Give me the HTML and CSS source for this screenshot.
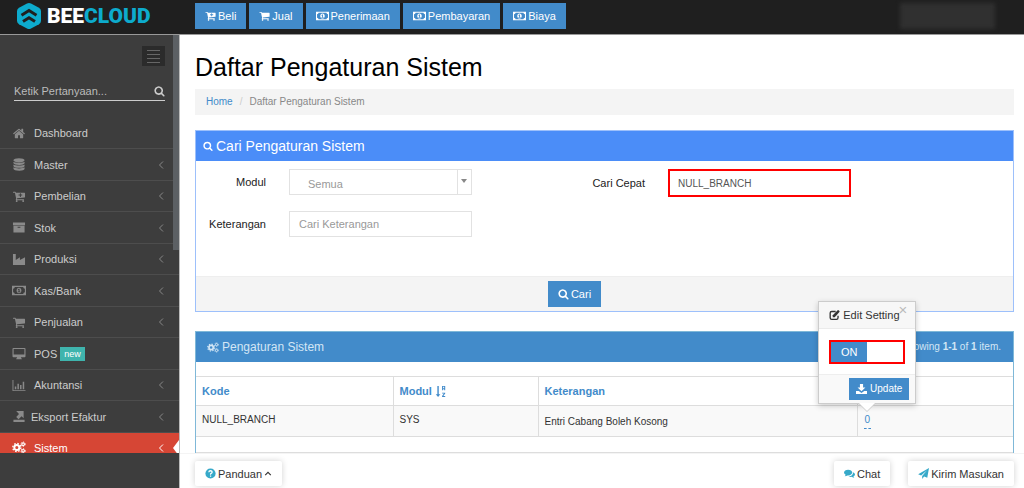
FILE: index.html
```html
<!DOCTYPE html>
<html lang="id">
<head>
<meta charset="utf-8">
<title>Daftar Pengaturan Sistem</title>
<link rel="stylesheet" href="styles.css">
</head>
<body>
<svg class="sprite" aria-hidden="true">
  <symbol id="search" viewBox="0 0 1792 1792"><path d="M1216 832q0-185-131.500-316.500t-316.500-131.500-316.500 131.500-131.500 316.500 131.500 316.500 316.500 131.500 316.500-131.500 131.500-316.500zm512 832q0 52-38 90t-90 38q-54 0-90-38l-343-342q-179 124-399 124-143 0-273.500-55.500t-225-150-150-225-55.500-273.500 55.500-273.500 150-225 225-150 273.500-55.500 273.500 55.500 225 150 150 225 55.500 273.500q0 220-124 399l343 343q37 37 37 90z"/></symbol>
  <symbol id="cart" viewBox="0 0 1792 1792"><path d="M704 1536q0 52-38 90t-90 38-90-38-38-90 38-90 90-38 90 38 38 90zm896 0q0 52-38 90t-90 38-90-38-38-90 38-90 90-38 90 38 38 90zm128-1088v512q0 24-16.500 42.500t-40.500 21.500l-1044 122q13 60 13 70 0 16-24 64h920q26 0 45 19t19 45-19 45-45 19h-1024q-26 0-45-19t-19-45q0-11 8-31.500t16-36 21.500-40 15.500-29.500l-177-823h-204q-26 0-45-19t-19-45 19-45 45-19h256q16 0 28.500 6.500t19.500 15.500 13 24.500 8 26 5.500 29.500 4.500 26h1201q26 0 45 19t19 45z"/></symbol>
  <symbol id="cart-plus" viewBox="0 0 1792 1792"><path fill-rule="evenodd" d="M704 1536q0 52-38 90t-90 38-90-38-38-90 38-90 90-38 90 38 38 90zm896 0q0 52-38 90t-90 38-90-38-38-90 38-90 90-38 90 38 38 90zm128-1088v512q0 24-16.500 42.500t-40.500 21.500l-1044 122q13 60 13 70 0 16-24 64h920q26 0 45 19t19 45-19 45-45 19h-1024q-26 0-45-19t-19-45q0-11 8-31.500t16-36 21.500-40 15.500-29.500l-177-823h-204q-26 0-45-19t-19-45 19-45 45-19h256q16 0 28.500 6.500t19.500 15.500 13 24.500 8 26 5.500 29.500 4.500 26h1201q26 0 45 19t19 45zM1024 450v180h-190v128h190v190h128v-190h190v-128h-190v-180z"/></symbol>
  <symbol id="money" viewBox="0 0 15 12"><path fill-rule="evenodd" d="M0 1h15v10H0zM3 2.200A2 2 0 0 1 1.200 4v4A2 2 0 0 1 3 9.800h9A2 2 0 0 1 13.800 8V4A2 2 0 0 1 12 2.200z"/><path fill-rule="evenodd" d="M7.500 3c1.600 0 2.600 1.400 2.600 3s-1 3-2.600 3-2.600-1.400-2.600-3 1-3 2.600-3zM7.200 4.200L6.200 5l.4.600.5-.3v1.900h-.8V8h2.500v-.8h-.7v-3z"/></symbol>
  <symbol id="home" viewBox="0 0 1792 1792"><path d="M1472 992v480q0 26-19 45t-45 19h-384v-384h-256v384h-384q-26 0-45-19t-19-45v-480q0-1 .5-3t.5-3l575-474 575 474q1 2 1 6zm223-69l-62 74q-8 9-21 11h-3q-13 0-21-7l-692-577-692 577q-12 8-24 7-13-2-21-11l-62-74q-8-10-7-23.500t11-21.500l719-599q32-26 76-26t76 26l244 204v-195q0-14 9-23t23-9h192q14 0 23 9t9 23v408l219 182q10 8 11 21.500t-7 23.500z"/></symbol>
  <symbol id="database" viewBox="0 0 14 14"><ellipse cx="7" cy="2.500" rx="6" ry="2.300"/><path d="M1 4c1.500 1.600 10.500 1.600 12 0v1.500c0 2.800-12 2.800-12 0zM1 7c1.500 1.600 10.500 1.600 12 0v1.500c0 2.800-12 2.800-12 0zM1 10c1.500 1.600 10.500 1.600 12 0v1.500c0 2.800-12 2.800-12 0z"/></symbol>
  <symbol id="archive" viewBox="0 0 14 14"><path fill-rule="evenodd" d="M.5 1.500h13v3H.5zM1 5.200h12v7.300H1zM5.500 6.200v1h3v-1z"/></symbol>
  <symbol id="factory" viewBox="0 0 14 14"><path d="M.5 13V1h3v6.500L8 4.500v3l5.500-3V13z"/></symbol>
  <symbol id="desktop" viewBox="0 0 14 14"><path fill-rule="evenodd" d="M1 1h12q1 0 1 1v8q0 1-1 1H9l.6 1.500h.4v.8H4v-.8h.4L5 11H1q-1 0-1-1V2q0-1 1-1zM1.200 2.200V8h11.600V2.200z"/></symbol>
  <symbol id="chart" viewBox="0 0 14 14"><path d="M0 1h1v11h13v1H0zM2.500 8h1.600v3H2.500zM5.300 5h1.600v6H5.300zM8.100 6.500h1.600V11H8.100zM11 3h1.600v8H11z"/></symbol>
  <symbol id="export" viewBox="0 0 14 14"><path d="M4 1h8v8l-2.200-2.200L6.500 10 4 7.500l3-3.200L5.500 2.800zM1 10.500h12V13H1z"/></symbol>
  <symbol id="cogs" viewBox="0 0 16 14"><g fill="none" stroke="currentColor"><circle cx="5.500" cy="7" r="2.900" stroke-width="2.300"/><circle cx="5.500" cy="7" r="4.600" stroke-width="1.500" stroke-dasharray="1.800 1.810"/><circle cx="12.700" cy="3.200" r="1.500" stroke-width="1.300"/><circle cx="12.700" cy="3.200" r="2.500" stroke-width="1" stroke-dasharray="1.300 1.318"/><circle cx="12.700" cy="10.800" r="1.500" stroke-width="1.300"/><circle cx="12.700" cy="10.800" r="2.500" stroke-width="1" stroke-dasharray="1.300 1.318"/></g></symbol>
  <symbol id="left" viewBox="0 0 8 10"><path d="M6 1.500L2.500 5 6 8.500" fill="none" stroke="currentColor"/></symbol>
  <symbol id="up" viewBox="0 0 10 8"><path d="M1.500 6L5 2.500 8.500 6" fill="none" stroke="currentColor" stroke-width="1.400"/></symbol>
  <symbol id="sort" viewBox="0 0 14 16"><path d="M3 1h1.800v10.500h2L3.900 15 1 11.500h2zM9 1h4v5.500h-1.300V5h-1.400v1.500H9zm1.300 1v1.800h1.400V2zM9 9.500h4v1.200l-2.400 3H13V15H9v-1.300l2.300-3H9z"/></symbol>
  <symbol id="edit" viewBox="0 0 14 14"><path d="M11.500 8v2.500q0 2-2 2h-6q-2 0-2-2v-6q0-2 2-2h5" fill="none" stroke="currentColor" stroke-width="1.700"/><path d="M4.800 10V7.300L11 1.100q.7-.6 1.400 0l.8.800q.6.700 0 1.400L7.300 10z"/></symbol>
  <symbol id="download" viewBox="0 0 14 14"><path d="M5 .5h4v4.500h3L7 10 2 5h3zM0 9.500h3.500L7 12l3.500-2.500H14v4H0z"/></symbol>
  <symbol id="help" viewBox="0 0 14 14"><circle cx="7" cy="7" r="6.500"/><path d="M4.800 5.400Q5 3.500 7 3.500t2.200 1.700Q9.200 6.500 7.100 7.400V8.500M7.100 9.600v1.500" stroke="#fff" stroke-width="1.600" fill="none"/></symbol>
  <symbol id="chat" viewBox="0 0 16 14"><path d="M6 1.500c3.300 0 6 1.900 6 4.200s-2.700 4.200-6 4.200l-1-.1Q3.500 11 1 11q1.200-.8 1.400-2.100Q0 7.700 0 5.700C0 3.400 2.700 1.500 6 1.500zM13 5c1.800.7 3 1.900 3 3.400q0 1.800-2.200 2.900.2 1.200 1.300 2-2.400-.1-3.700-1.400-2.900.4-4.900-1C10.500 10.800 13.500 8.500 13 5z"/></symbol>
  <symbol id="plane" viewBox="0 0 14 14"><path d="M14 0l-2.200 12.500-4-1.600L5.300 14v-3.700L11.500 3 4 9.500.2 8z"/></symbol>
</svg>

<header class="topbar">
  <a class="brand" href="#" aria-label="Beecloud">
    <svg class="brand-mark" viewBox="0 0 24 26" aria-hidden="true"><path class="hex" d="M10 .5q2-1 4 0l8 4.300q2 1.200 2 3.200v10q0 2-2 3.200l-8 4.300q-2 1-4 0l-8-4.300q-2-1.200-2-3.200V8q0-2 2-3.200z"/><path class="chevrons" d="M4.500 12.200L12 7.500l7.500 4.700M6 18.500l6-3.700 6 3.700"/></svg>
    <span class="brand-name">BEE<span class="brand-accent">CLOUD</span></span>
  </a>
  <nav class="shortcuts">
    <a class="btn" href="#"><svg class="ico"><use href="#cart-plus"/></svg>Beli</a>
    <a class="btn" href="#"><svg class="ico"><use href="#cart"/></svg>Jual</a>
    <a class="btn" href="#"><svg class="ico wide"><use href="#money"/></svg>Penerimaan</a>
    <a class="btn" href="#"><svg class="ico wide"><use href="#money"/></svg>Pembayaran</a>
    <a class="btn" href="#"><svg class="ico wide"><use href="#money"/></svg>Biaya</a>
  </nav>
  <div class="account"></div>
</header>

<div class="shell">
  <aside class="sidebar">
    <div class="sidebar-scroll">
      <button class="burger" type="button" aria-label="Menu"><span></span><span></span><span></span><span></span></button>
      <form class="ask">
        <input type="text" placeholder="Ketik Pertanyaan..." aria-label="Ketik Pertanyaan">
        <button type="button" aria-label="Cari"><svg class="ico"><use href="#search"/></svg></button>
      </form>
      <nav class="menu">
        <a href="#"><svg class="mi"><use href="#home"/></svg><span>Dashboard</span></a>
        <a href="#"><svg class="mi"><use href="#database"/></svg><span>Master</span><svg class="caret"><use href="#left"/></svg></a>
        <a href="#"><svg class="mi"><use href="#cart-plus"/></svg><span>Pembelian</span><svg class="caret"><use href="#left"/></svg></a>
        <a href="#"><svg class="mi"><use href="#archive"/></svg><span>Stok</span><svg class="caret"><use href="#left"/></svg></a>
        <a href="#"><svg class="mi"><use href="#factory"/></svg><span>Produksi</span><svg class="caret"><use href="#left"/></svg></a>
        <a href="#"><svg class="mi"><use href="#money"/></svg><span>Kas/Bank</span><svg class="caret"><use href="#left"/></svg></a>
        <a href="#"><svg class="mi"><use href="#cart"/></svg><span>Penjualan</span><svg class="caret"><use href="#left"/></svg></a>
        <a href="#"><svg class="mi"><use href="#desktop"/></svg><span>POS</span><span class="tag">new</span></a>
        <a href="#"><svg class="mi"><use href="#chart"/></svg><span>Akuntansi</span><svg class="caret"><use href="#left"/></svg></a>
        <a class="tight" href="#"><svg class="mi"><use href="#export"/></svg><span>Eksport Efaktur</span><svg class="caret"><use href="#left"/></svg></a>
        <a class="active" href="#"><svg class="mi"><use href="#cogs"/></svg><span>Sistem</span><svg class="caret"><use href="#left"/></svg></a>
      </nav>
      <div class="thumb"></div>
    </div>
  </aside>

  <div class="page">
    <main class="content">
      <h1>Daftar Pengaturan Sistem</h1>
      <nav class="crumbs"><a href="#">Home</a><span class="slash">/</span><span>Daftar Pengaturan Sistem</span></nav>

      <section class="panel search-panel">
        <h2><svg class="ico"><use href="#search"/></svg>Cari Pengaturan Sistem</h2>
        <form>
          <div class="fields">
            <div class="field">
              <label for="modul">Modul</label>
              <div class="select"><select id="modul"><option>Semua</option></select></div>
            </div>
            <div class="field">
              <label for="cepat">Cari Cepat</label>
              <input class="marked" id="cepat" type="text" value="NULL_BRANCH">
            </div>
            <div class="field">
              <label for="ket">Keterangan</label>
              <input id="ket" type="text" placeholder="Cari Keterangan">
            </div>
          </div>
          <div class="actions"><button class="btn" type="button"><svg class="ico"><use href="#search"/></svg>Cari</button></div>
        </form>
      </section>

      <section class="panel list-panel">
        <div class="list-head">
          <h2><svg class="ico"><use href="#cogs"/></svg>Pengaturan Sistem</h2>
          <p>Showing <b>1-1</b> of <b>1</b> item.</p>
        </div>
        <table>
          <colgroup><col class="c-kode"><col class="c-modul"><col class="c-ket"><col class="c-nilai"></colgroup>
          <thead><tr>
            <th><a href="#">Kode</a></th>
            <th><a href="#">Modul <svg class="sort"><use href="#sort"/></svg></a></th>
            <th><a href="#">Keterangan</a></th>
            <th></th>
          </tr></thead>
          <tbody><tr>
            <td>NULL_BRANCH</td>
            <td>SYS</td>
            <td class="desc">Entri Cabang Boleh Kosong</td>
            <td>
              <div class="value">
                <a href="#">0</a>
                <div class="popover">
                  <div class="pop-title"><svg class="ico"><use href="#edit"/></svg>Edit Setting<button type="button" aria-label="Tutup">×</button></div>
                  <div class="pop-body"><label class="toggle"><input type="checkbox" checked><span>ON</span></label></div>
                  <div class="pop-foot"><button class="btn" type="button"><svg class="ico"><use href="#download"/></svg>Update</button></div>
                </div>
              </div>
            </td>
          </tr></tbody>
        </table>
        <div class="list-foot"></div>
      </section>
    </main>
    <footer class="dock">
      <button type="button"><svg class="ico"><use href="#help"/></svg>Panduan<svg class="up"><use href="#up"/></svg></button>
      <button class="push" type="button"><svg class="ico"><use href="#chat"/></svg>Chat</button>
      <button type="button"><svg class="ico"><use href="#plane"/></svg>Kirim Masukan</button>
    </footer>
  </div>
</div>
</body>
</html>
```
FILE: styles.css
```css
* { box-sizing: border-box; }
body {
  margin: 0;
  height: 100vh;
  display: flex;
  flex-direction: column;
  overflow: hidden;
  font: 11px/16px "Liberation Sans", Arial, sans-serif;
  color: #333;
  background: #fff;
}
a { color: #428bca; text-decoration: none; }
button, input, select { font: inherit; color: inherit; }
h1, h2, p { margin: 0; font-weight: 400; }
svg { fill: currentColor; flex: none; }
.sprite { display: none; }
.ico { width: 11px; height: 12px; }
.ico.wide { width: 13px; }

.btn {
  display: inline-flex;
  align-items: center;
  gap: 2px;
  height: 26px;
  padding: 0 10px;
  border: 0;
  background: #428bca;
  color: #fff;
}

/* Top bar */
.topbar {
  display: flex;
  align-items: center;
  height: 35px;
  flex: none;
  padding: 0 29px 2px 17px;
  background: #1f1f1f;
  border-bottom: 1px solid #999;
}
.brand { display: flex; align-items: center; gap: 6px; width: 178px; color: #fff; }
.brand-mark { width: 24px; height: 26px; }
.hex { fill: #0dabcd; }
.chevrons { fill: none; stroke: #1f1f1f; stroke-width: 3; }
.brand-name { font: 900 21px/26px Roboto, sans-serif; }
.brand-accent { color: #0dabcd; }
.shortcuts { display: flex; gap: 3px; }
.account {
  width: 95px;
  height: 26px;
  margin-left: auto;
  background: #303030;
  filter: blur(2px);
}

/* Sidebar */
.shell { flex: 1; display: flex; min-height: 0; }
.sidebar {
  width: 180px;
  flex: none;
  padding-bottom: 35px;
  background: #3d3d3d;
  border-right: 1px solid #bbb;
}
.sidebar-scroll {
  position: relative;
  height: 100%;
  overflow: hidden;
  display: flex;
  flex-direction: column;
}
.burger {
  align-self: flex-end;
  flex: none;
  display: grid;
  gap: 3px;
  align-content: center;
  width: 23px;
  height: 20px;
  margin: 11px 14px 0 0;
  padding: 0 5px;
  border: 0;
  background: #2b2b2b;
}
.burger span { height: 1px; background: #666; }
.ask {
  flex: none;
  display: flex;
  align-items: center;
  margin: 15px 14px 17px 14px;
  height: 20px;
  border-bottom: 1px solid #ccc;
  color: #ccc;
}
.ask input { flex: 1; min-width: 0; padding: 0; border: 0; background: none; outline: 0; }
.ask input::placeholder { color: #bbb; opacity: 1; }
.ask button { display: flex; padding: 0; border: 0; background: none; }
.menu { flex: none; display: grid; grid-template-rows: repeat(5, 31px 32px) 31px; }
.menu a {
  display: flex;
  align-items: center;
  gap: 8px;
  padding: 0 14px 0 12px;
  border-bottom: 1px solid #4d4d4d;
  color: #ccc;
}
.menu .tight { gap: 5px; }
.mi { width: 14px; height: 13px; color: #8a8a8a; }
.caret { width: 8px; height: 10px; margin-left: auto; color: #888; }
.tag {
  margin-left: -5px;
  padding: 0 4px;
  background: #3fb4ad;
  color: #fff;
  font-size: 9px;
  line-height: 14px;
}
.menu .active { position: relative; padding-bottom: 2px; background: #d64635; border: 0; color: #fff; }
.active .mi, .active .caret { color: #fff; }
.active::after {
  content: "";
  position: absolute;
  right: 0;
  top: 7px;
  border: 8px solid transparent;
  border-right: 6px solid #fff;
  border-left: 0;
}
.thumb {
  position: absolute;
  right: 0;
  top: 0;
  width: 6px;
  height: 215px;
  background: #5c6064;
}

/* Page */
.page { flex: 1; min-width: 0; display: flex; flex-direction: column; }
.content { flex: 1; min-height: 0; overflow: hidden; padding: 16px 10px 0 15px; }
h1 { font-size: 25px; line-height: 32px; color: #000; }
.crumbs {
  display: flex;
  gap: 7px;
  margin-top: 6px;
  padding: 5px 11px;
  background: #f4f4f4;
  color: #888;
  font-size: 10px;
}
.slash { color: #ccc; }

.panel { margin-top: 15px; border: 1px solid #9dc0fb; }
.panel h2 { display: flex; align-items: center; gap: 3px; font-size: 14px; line-height: 30px; }
.panel h2 .ico { width: 10px; height: 10px; }
.search-panel h2 { padding-left: 7px; background: #4b8df8; color: #fff; }
.fields {
  display: grid;
  grid-template-columns: 379px 1fr;
  row-gap: 16px;
  height: 115px;
  padding-top: 8px;
  align-content: start;
  color: #222;
}
.field { display: grid; grid-template-columns: 70px 183px; column-gap: 23px; align-items: center; height: 26px; }
.field label { text-align: right; }
.field input, .select select {
  width: 100%;
  height: 26px;
  padding: 0 9px;
  border: 1px solid #e2e2e2;
  border-radius: 0;
  background: #fff;
  color: #555;
  outline: 0;
}
.field input::placeholder { color: #999; opacity: 1; }
.field .marked { height: 28px; padding: 0 8px; border: 2px solid #f00; font-size: 10px; }
.select { position: relative; }
.select select { display: block; appearance: none; padding: 4px 18px 0 18px; color: #999; }
.select::before {
  content: "";
  position: absolute;
  right: 14px;
  top: 1px;
  bottom: 1px;
  border-left: 1px solid #e2e2e2;
}
.select::after {
  content: "";
  position: absolute;
  right: 5px;
  top: 10px;
  border: 3px solid transparent;
  border-top: 4px solid #888;
  border-bottom: 0;
}
.actions {
  display: flex;
  justify-content: center;
  padding: 4px 60px 4px 0;
  background: #f4f4f4;
  border-top: 1px solid #eee;
}

.list-panel { margin-top: 19px; border-color: #7fb8d8; }
.list-head {
  display: flex;
  justify-content: space-between;
  align-items: center;
  padding: 0 12px 0 11px;
  background: #428bca;
  color: #d3e6f5;
}
.list-head h2 { font-size: 12px; }
.list-head h2 .ico { width: 12px; height: 11px; }
.list-head p { font-size: 10px; }
table { width: 100%; margin-top: 14px; border-collapse: collapse; table-layout: fixed; }
.c-kode { width: 197px; }
.c-modul { width: 145px; }
.c-ket { width: 319px; }
th, td { border: 1px solid #ddd; padding: 6px; text-align: left; vertical-align: top; }
th:first-child, td:first-child { border-left: 0; }
th:last-child, td:last-child { border-right: 0; }
th { height: 29px; }
.sort { width: 11px; height: 13px; vertical-align: -3px; }
td { height: 31px; background: #f9f9f9; font-size: 10px; }
.desc { padding-top: 8px; }
.value { position: relative; display: inline-block; }
.value > a { display: block; padding: 0 1px; border-bottom: 1px dashed #428bca; }
.list-foot { height: 16px; border-bottom: 1px solid #ddd; }

/* Popover */
.popover {
  position: absolute;
  left: 50%;
  bottom: 100%;
  width: 98px;
  margin: 0 0 8px -49px;
  background: #fff;
  border: 1px solid #ccc;
  box-shadow: 0 2px 6px rgba(0, 0, 0, .2);
  font-size: 11px;
}
.popover::after {
  content: "";
  position: absolute;
  left: 40px;
  top: 100%;
  border: 8px solid transparent;
  border-top-color: #fff;
  border-bottom: 0;
  filter: drop-shadow(0 1px 0 #ccc);
}
.pop-title {
  display: flex;
  align-items: center;
  gap: 3px;
  height: 27px;
  padding-left: 10px;
  background: #f7f7f7;
  border-bottom: 1px solid #ebebeb;
  white-space: nowrap;
}
.pop-title button { align-self: flex-start; margin-left: -4px; padding: 0; border: 0; background: none; color: #bbb; font-size: 15px; }
.pop-body { padding: 11px 10px 10px; }
.toggle { position: relative; display: flex; height: 24px; border: 2px solid #f00; background: #fff; }
.toggle input { position: absolute; inset: 0; margin: 0; opacity: 0; }
.toggle span { width: 50%; background: #428bca; color: #fff; text-align: center; line-height: 20px; }
.pop-foot { display: flex; justify-content: flex-end; padding: 3px 6px; background: #f9f9f9; border-top: 1px solid #eee; }
.pop-foot .btn { height: 22px; gap: 3px; padding: 0 7px; font-size: 10px; }

/* Bottom dock */
.dock {
  display: flex;
  align-items: flex-start;
  gap: 18px;
  height: 35px;
  flex: none;
  padding: 7px 10px 0 15px;
  background: #fff;
  border-top: 1px solid #f4f4f4;
}
.dock button {
  display: flex;
  align-items: center;
  gap: 2px;
  height: 25px;
  padding: 0 10px;
  border: 0;
  border-radius: 2px;
  background: #fff;
  box-shadow: 0 0 6px rgba(0, 0, 0, .18);
  color: #333;
}
.dock .ico { width: 11px; height: 11px; color: #36a9c9; }
.dock .push { margin-left: auto; }
.up { width: 8px; height: 7px; }
```
